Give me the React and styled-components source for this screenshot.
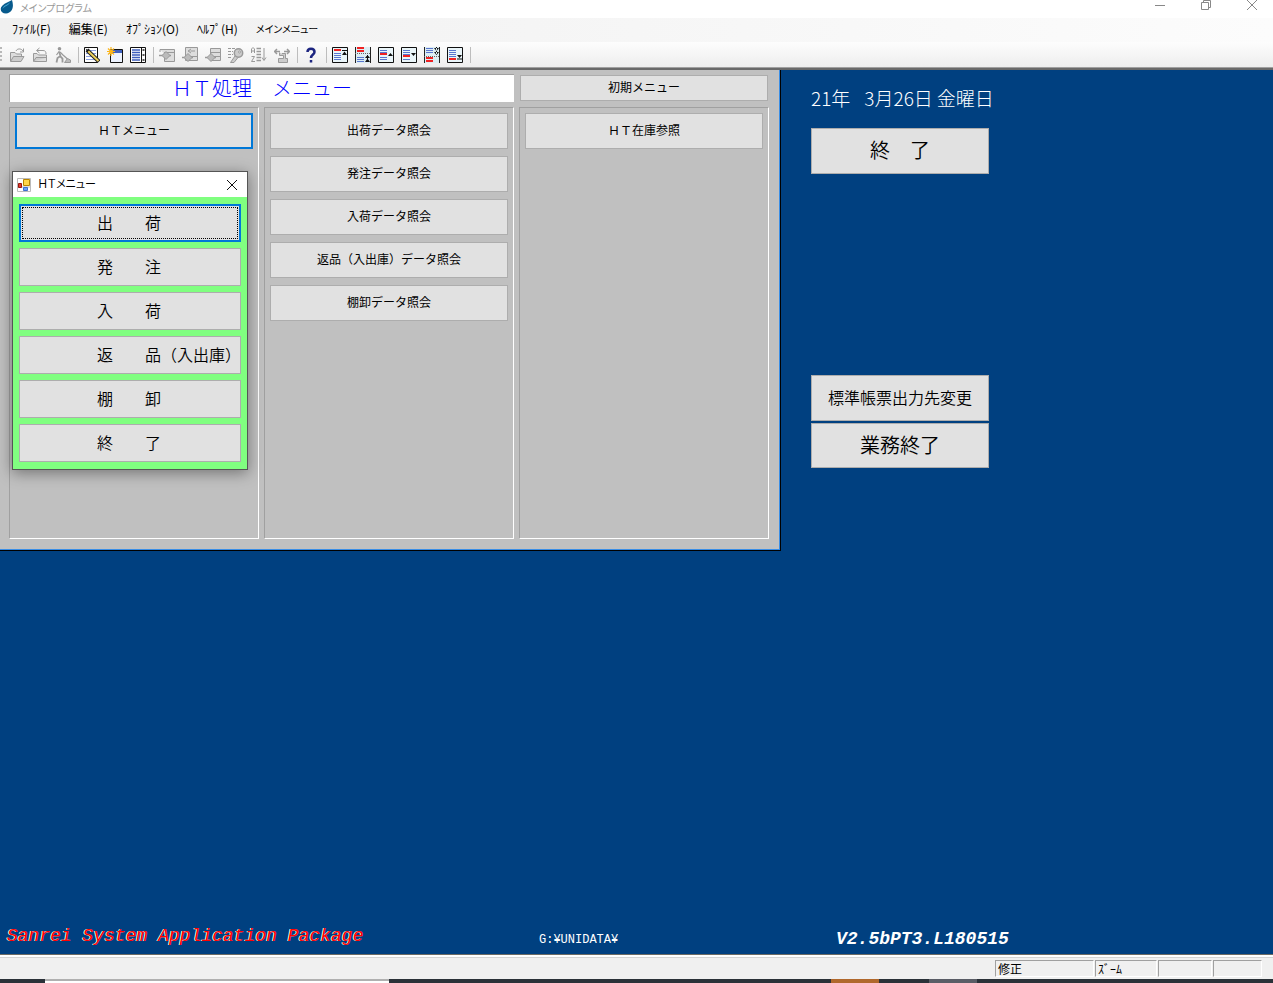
import React from "react";
import styled, { createGlobalStyle, css } from "styled-components";

const GlobalStyle = createGlobalStyle`
  *, *::before, *::after { box-sizing: border-box; }
  body {
    margin: 0;
    background: #f0f0f0;
    font-family: "Noto Sans CJK JP", "Liberation Sans", sans-serif;
    font-size: 12px;
    color: #000;
  }
  button { font-family: inherit; color: inherit; }
`;

const mono = css`font-family: "Liberation Mono", "Noto Sans CJK JP", monospace;`;

const Window = styled.div`
  display: flex;
  flex-direction: column;
  min-height: 100vh;
`;

const TitleBar = styled.header`
  display: flex;
  align-items: flex-start;
  height: 18px;
  background: #fff;
`;

const AppTitle = styled.h1`
  flex: 1;
  margin: 0 0 0 6px;
  font-size: 10px;
  font-weight: 400;
  line-height: 15px;
  color: #999;
  font-feature-settings: "palt";
`;

const CaptionButton = styled.button`
  width: 46px;
  height: 12px;
  padding: 0 0 0 4px;
  border: 0;
  background: none;
  display: flex;
  justify-content: center;
`;

const MenuBar = styled.nav`
  display: flex;
  gap: 18px;
  height: 24px;
  padding-left: 12px;
  background: linear-gradient(90deg, #f0f0f0, #fcfcfc);
`;

const MenuItem = styled.button`
  height: 22px;
  padding: 0;
  border: 0;
  background: none;
  font-size: ${(p) => (p.$tight ? 10 : 12)}px;
  line-height: 22px;
  white-space: nowrap;
  font-feature-settings: ${(p) => (p.$tight ? '"palt"' : "normal")};
`;

const ToolBar = styled.div`
  display: flex;
  align-items: center;
  height: 28px;
  padding-left: 5px;
  background: linear-gradient(#fdfdfd, #ededed);
  border-bottom: 2px solid #696969;
  box-shadow: inset 0 -1px #a0a0a0;
  position: relative;
`;

const Grip = styled.span`
  position: absolute;
  left: 0;
  top: 5px;
  width: 2px;
  height: 16px;
  background: repeating-linear-gradient(#b8b8b8 0 2px, transparent 2px 4px);
`;

const ToolButton = styled.button`
  display: grid;
  place-items: center;
  width: 23px;
  height: 22px;
  padding: 0;
  border: 0;
  background: none;
`;

const Separator = styled.span`
  width: 6px;
  height: 16px;
  background: linear-gradient(#bdbdbd, #bdbdbd) 4px 0 / 1px 100% no-repeat;
`;

const Workspace = styled.main`
  flex: 1;
  display: flex;
  flex-direction: column;
  justify-content: space-between;
  background: #004080;
  position: relative;
`;

const Upper = styled.div`
  display: flex;
  align-items: flex-start;
`;

const Panel = styled.section`
  flex: 0 1 781px;
  display: grid;
  grid-template-columns: repeat(3, 1fr);
  gap: 5px;
  padding: 4px 11px 11px 9px;
  background: #c0c0c0;
  border: solid #000;
  border-width: 0 1px 1px 0;
  box-shadow: inset -1px -1px #3a8ee6;
`;

const PanelTitle = styled.h2`
  grid-column: span 2;
  margin: 0;
  height: 28px;
  border: solid #a0a0a0;
  border-width: 1px 0 0 1px;
  background: #fff;
  color: #00f;
  font-size: 20px;
  font-weight: 300;
  line-height: 25px;
  text-align: center;
`;

const Button = styled.button`
  width: 100%;
  height: ${(p) => p.$height || 36}px;
  padding: 0 0 2px;
  border: 1px solid #adadad;
  background: #e1e1e1;
  font-size: ${(p) => p.$size || 12}px;
  font-weight: ${(p) => (p.$size ? 350 : 400)};
  line-height: 1;
  white-space: pre;
  ${(p) => p.$active && "border: 2px solid #0078d7;"}
`;

const HeadCell = styled.div`
  padding: 1px;
`;

const Column = styled.div`
  display: flex;
  flex-direction: column;
  gap: 7px;
  height: 432px;
  padding: 5px;
  border: 1px solid;
  border-color: #a0a0a0 #fff #fff #a0a0a0;
`;

const Side = styled.aside`
  width: 210px;
  padding: 16px 0 0 30px;
`;

const DateLine = styled.p`
  display: flex;
  gap: ${(p) => p.$gap}px;
  margin: 0 0 18px;
  color: #fff;
  font-size: 19px;
  font-weight: 300;
  line-height: 24px;
  white-space: nowrap;
`;

const DateYear = styled.span`
  margin-right: 10px;
`;

const SideButtons = styled.div`
  display: flex;
  flex-direction: column;
  gap: 2px;
  width: 178px;
  margin-bottom: ${(p) => p.$space || 0}px;
`;

const Credits = styled.footer`
  display: grid;
  grid-template-columns: 532px 297px 1fr;
  align-items: center;
  height: 36px;
  padding-left: 7px;
  color: #fff;
  ${mono}
`;

const Product = styled.span`
  color: #f00;
  font-size: 18px;
  font-style: italic;
  text-shadow: -1px 0 #fff;
  white-space: nowrap;
`;

const DataPath = styled.span`
  padding-top: 8px;
  font-size: 12px;
`;

const Version = styled.span`
  padding-top: 6px;
  font-size: 18px;
  font-style: italic;
  font-weight: 700;
`;

const StatusBar = styled.div`
  display: flex;
  justify-content: flex-end;
  gap: 1px;
  height: 25px;
  padding: 5px 11px 2px 0;
  border-top: 1px solid #6c6c66;
  box-shadow: inset 0 2px #fff, inset 0 3px #d4d4d4;
`;

const StatusCell = styled.span`
  width: ${(p) => p.$width}px;
  height: 17px;
  padding-left: 2px;
  border: 1px solid;
  border-color: #a0a0a0 #fff #fff #a0a0a0;
  font-size: 12px;
  line-height: 16px;
  white-space: nowrap;
`;

const TaskStrip = styled.div`
  display: grid;
  grid-template-columns: 45px 344px 442px 48px 50px 48px 1fr;
  height: 4px;
  background: #2a3138;
`;

const TaskBlock = styled.span`
  grid-column: ${(p) => p.$col};
  grid-row: 1;
  background: ${(p) => p.$color};
  ${(p) => p.$edge && "border-top: 2px solid #b0b0b0;"}
`;

const Dialog = styled.section`
  position: absolute;
  left: 12px;
  top: 101px;
  width: 236px;
  border: 1px solid #555;
  background: #80ff80;
  box-shadow: 0 3px 14px rgba(0, 0, 0, 0.4);
`;

const DialogBar = styled.div`
  display: flex;
  align-items: center;
  height: 25px;
  padding: 0 8px 0 4px;
  background: #fff;
`;

const DialogTitle = styled.h2`
  flex: 1;
  margin: 0 0 0 7px;
  font-size: 11px;
  font-weight: 400;
  line-height: 22px;
  height: 25px;
  font-feature-settings: "palt";
`;

const CloseButton = styled.button`
  display: grid;
  place-items: center;
  width: 14px;
  height: 14px;
  padding: 0;
  border: 0;
  background: none;
`;

const DialogList = styled.div`
  display: flex;
  flex-direction: column;
  gap: 6px;
  padding: 7px 6px;
`;

const DialogButton = styled(Button)`
  padding-left: ${(p) => (p.$active ? 76 : 77)}px;
  text-align: left;
  ${(p) => p.$active && "outline: 1px dotted #000; outline-offset: -4px;"}
`;

const Icon = ({ children, size = 16, ...rest }) => (
  <svg width={size} height={size} viewBox="0 0 16 16" fill="none" aria-hidden="true" {...rest}>
    {children}
  </svg>
);

const G = "#999";

const OpenIcon = () => (
  <Icon stroke={G}>
    <path d="M1.500 14V5.500H6L7.500 7H12.500V9" fill="#ddd" />
    <path d="M1.500 14.500L4.500 9.500H15L12 14.500Z" fill="#ccc" />
    <path d="M7 4C8 1.500 12 1 14 4M14.500 1.500V5H11" />
  </Icon>
);
const BackIcon = () => (
  <Icon stroke={G}>
    <path d="M1.500 14V6.500H5L6.500 8H14.500V14.500H1.500" fill="#ddd" />
    <path d="M1.500 14.500L4 10.500H14.500" fill="#ccc" />
    <path d="M5 3.500H11C13.500 3.500 14 5 14 7M7.500 1L4.500 3.500L7.500 6" />
  </Icon>
);
const WorkIcon = () => (
  <Icon stroke={G}>
    <circle cx="4.500" cy="1.800" r="1.800" fill={G} stroke="none" />
    <path d="M4 4.500L5.500 9M5.500 9L2.500 11L1.500 15.500M5 9L7.500 11.500V15.500" strokeWidth="1.800" />
    <path d="M4 4.500L1.500 8M5 5L8 8L12.500 12" strokeWidth="1.200" />
    <path d="M9.500 15.500L12.500 11.500L15.500 13V15.500Z" fill="#bbb" />
  </Icon>
);
const EditIcon = () => (
  <Icon>
    <path d="M.5 .5H13.500V15.500H.5Z" fill="#fff" stroke="#111" />
    <path d="M2 3.500H12M2 6.500H12M2 9.500H12M2 12.500H12" stroke="#8aa0e0" />
    <path d="M3 3L15 14.500" stroke="#222" strokeWidth="4" />
    <path d="M4 4L14.500 14" stroke="#ecd05c" strokeWidth="2" />
    <path d="M1.500 1.500L5 3.500L3.500 5Z" fill="#111" />
  </Icon>
);
const NewIcon = () => (
  <Icon>
    <path d="M3.500 2.500H15.500V15.500H3.500Z" fill="#edf3ff" stroke="#111" />
    <path d="M4 4.500H15" stroke="#3f62c0" strokeWidth="3" />
    <path d="M4 0V9M0 4.500H8M1 1.500L7 7.500M7 1.500L1 7.500" stroke="#fbb51c" strokeWidth="1.200" />
  </Icon>
);
const ListIcon = () => (
  <Icon>
    <path d="M.5 .5H15.500V15.500H.5Z" fill="#fff" stroke="#111" />
    <path d="M2 3H10M2 5.500H10M2 8H10M2 10.500H10M2 13H10" stroke="#3f5fbd" strokeWidth="1.500" />
    <path d="M11.500 1V15" stroke="#111" />
    <path d="M13.500 2V4M13.500 7V9M13.500 12V14" stroke="#555" strokeWidth="2" />
  </Icon>
);
const NodeIcon = ({ kind }) => (
  <Icon stroke={G}>
    {kind === 0 && <path d="M1 2.500H15.500V14.500H5.500V7M5 5.500H15M1 2.500V5" fill="#ddd" />}
    {kind === 1 && <path d="M3.500 .5H15.500V13.500H3.500ZM4 9.500H15M9 2L6 4L9 6M7 4H13" fill="#ddd" />}
    {kind === 2 && <path d="M5.500 1.500H15.500V13.500H5.500ZM6 5.500H15M6 9.500H15" fill="#ddd" />}
    <path d={kind === 0 ? "M0 8.500H12" : "M0 10.500H11"} strokeWidth="1.500" />
    <path d={kind === 0 ? "M7 4.500L11 8.500L7 12.500L3 8.500Z" : "M6 6.500L10 10.500L6 14.500L2 10.500Z"} fill="#bbb" />
  </Icon>
);
const KeyIcon = () => (
  <Icon stroke={G}>
    <path d="M0 1.500H8M0 4.500H5M0 7.500H5M0 10.500H3" strokeDasharray="3 1" />
    <path d="M7 9L2.500 15.500H6L10 10.500" fill="#ccc" />
    <circle cx="10.500" cy="6" r="4.200" fill="#ccc" strokeWidth="1.500" />
    <circle cx="11.500" cy="5" r="1" fill="#fff" />
  </Icon>
);
const SortIcon = () => (
  <Icon stroke={G}>
    <path d="M.5 6V2L2 .5L3.500 2V6M.5 4H3.500M.5 9.500H3.500L.5 14.500H4" />
    <path d="M5.500 1.500H10M5.500 4.500H10M5.500 7.500H10M5.500 10.500H10M5.500 13.500H10" strokeWidth="1.500" />
    <path d="M13 1V13M11 10.500L13 13.500L15 10.500" />
  </Icon>
);
const MoveIcon = () => (
  <Icon stroke={G}>
    <path d="M.5 4.500H6M3 2L.5 4.500L3 7M10 4.500H15.500M13 2L15.500 4.500L13 7" strokeWidth="1.500" />
    <path d="M5.500 5.500V8.500H9.500V11.500H4.500V15.500H13.500V11.500H11.500V6.500H8" fill="#ccc" />
  </Icon>
);
const HelpIcon = () => (
  <Icon stroke="#1d2580" strokeWidth="2.500">
    <path d="M4.500 5C4.500 .5 11.500 .5 11.500 5C11.500 7.500 8 7.500 8 11M8 13V15.500" />
  </Icon>
);

const scrollMarks = [
  { red: [3], lines: [6, 8, 10, 12], mark: "M10 3H15V4H10ZM12.500 4.500L15 8H10Z" },
  { red: [1, 4], lines: [10, 12, 14], mark: "M12.500 8L15 11H10ZM12.500 11.500L15 15H10ZM12 8H13V15H12Z", split: 6 },
  { red: [7], lines: [3, 5, 10, 12], mark: "M12.500 6L15 9H10Z" },
  { red: [9], lines: [3, 5, 7, 12], mark: "M12.500 9L15 6H10Z" },
  { red: [11, 14], lines: [1, 3, 5], mark: "M12.500 4L15 1H10ZM12.500 8L15 5H10ZM12 0H13V7H12Z", split: 9 },
  { red: [12], lines: [3, 5, 7, 9], mark: "M12.500 11L15 8H10ZM10 11.500H15V12.500H10Z" },
];

const ScrollIcon = ({ red, lines, mark, split }) => (
  <Icon>
    {split ? (
      <>
        <path d="M0 0H16V16H0Z" fill="#dcedf4" />
        <path d="M.5 0V16M15.500 0V16" stroke="#222" />
        <path d={`M0 ${split}.5H16`} stroke="#666" strokeDasharray="1 1" />
      </>
    ) : (
      <path d="M.5 .5H15.500V15.500H.5Z" fill="#eaf5f9" stroke="#111" />
    )}
    {lines.map((y) => <path key={y} d={`M2 ${y}.5H9`} stroke="#5a76cf" />)}
    {red.map((y) => <path key={y} d={`M2 ${y}H9`} stroke="#f02222" strokeWidth="2" />)}
    <path d={mark} fill="#111" />
  </Icon>
);

const toolGroups = [
  [["開く", <OpenIcon />], ["戻る", <BackIcon />], ["実行", <WorkIcon />]],
  [["編集", <EditIcon />], ["新規", <NewIcon />], ["一覧", <ListIcon />]],
  [
    ["挿入", <NodeIcon kind={0} />],
    ["置換", <NodeIcon kind={1} />],
    ["追加", <NodeIcon kind={2} />],
    ["キー", <KeyIcon />],
    ["並べ替え", <SortIcon />],
    ["移動", <MoveIcon />],
  ],
  [["ヘルプ", <HelpIcon />]],
  scrollMarks.map((m, i) => [`スクロール${i + 1}`, <ScrollIcon {...m} />]),
];

const menus = ["ﾌｧｲﾙ(F)", "編集(E)", "ｵﾌﾟｼｮﾝ(O)", "ﾍﾙﾌﾟ(H)"];
const inquiries = ["出荷データ照会", "発注データ照会", "入荷データ照会", "返品（入出庫）データ照会", "棚卸データ照会"];
const dialogItems = ["出　　荷", "発　　注", "入　　荷", "返　　品（入出庫）", "棚　　卸", "終　　了"];

export default function App() {
  return (
    <Window>
      <GlobalStyle />
      <TitleBar>
        <svg width="14" height="14" viewBox="0 0 14 14" aria-hidden="true">
          <path d="M12 0C14 6 13 13 6 13.500C1 13.500-1 9 2.500 5.500C5 3 9 2 12 0Z" fill="#075a8c" />
          <path d="M10 2C8 5 3 5 2.500 9C5 5.500 9 6 10 2Z" fill="#46a5cf" />
        </svg>
        <AppTitle>メインプログラム</AppTitle>
        <CaptionButton aria-label="最小化">
          <svg width="12" height="12" aria-hidden="true"><path d="M1 5.500H11" stroke="#888" /></svg>
        </CaptionButton>
        <CaptionButton aria-label="元に戻す">
          <svg width="12" height="12" fill="none" stroke="#888" aria-hidden="true">
            <path d="M1.500 2.500H8.500V9.500H1.500ZM3.500 2V.5H10.500V7.500H9" />
          </svg>
        </CaptionButton>
        <CaptionButton aria-label="閉じる">
          <svg width="12" height="12" stroke="#888" aria-hidden="true"><path d="M1 0L11 10M11 0L1 10" /></svg>
        </CaptionButton>
      </TitleBar>
      <MenuBar>
        {menus.map((m) => <MenuItem key={m}>{m}</MenuItem>)}
        <MenuItem $tight>メインメニュー</MenuItem>
      </MenuBar>
      <ToolBar>
        <Grip />
        {toolGroups.map((group, i) => (
          <React.Fragment key={i}>
            {group.map(([label, icon]) => (
              <ToolButton key={label} aria-label={label}>{icon}</ToolButton>
            ))}
            <Separator />
          </React.Fragment>
        ))}
      </ToolBar>
      <Workspace>
        <Upper>
          <Panel>
            <PanelTitle>ＨＴ処理　メニュー</PanelTitle>
            <HeadCell><Button $height={26}>初期メニュー</Button></HeadCell>
            <Column><Button $active>ＨＴメニュー</Button></Column>
            <Column>{inquiries.map((t) => <Button key={t}>{t}</Button>)}</Column>
            <Column><Button>ＨＴ在庫参照</Button></Column>
          </Panel>
          <Side>
            <DateLine $gap={4}><DateYear>21年</DateYear><span>3月26日</span><span>金曜日</span></DateLine>
            <SideButtons $space={201}><Button $height={46} $size={20}>終　了</Button></SideButtons>
            <SideButtons>
              <Button $height={46} $size={16}>標準帳票出力先変更</Button>
              <Button $height={45} $size={20}>業務終了</Button>
            </SideButtons>
          </Side>
        </Upper>
        <Credits>
          <Product>Sanrei System Application Package</Product>
          <DataPath>G:¥UNIDATA¥</DataPath>
          <Version>V2.5bPT3.L180515</Version>
        </Credits>
        <Dialog role="dialog" aria-label="ＨＴメニュー">
          <DialogBar>
            <svg width="14" height="14" viewBox="0 0 14 14" aria-hidden="true">
              <path d="M.5 .5H13.500V13.500H.5ZM.5 9H13" fill="#fff" stroke="#bbb" />
              <path d="M6.500 1.500H12.500V7.500H6.500Z" fill="#ffd64a" stroke="#b98500" />
              <path d="M1.500 5.500H4.500V9.500H1.500Z" fill="#e03c30" stroke="#98150d" />
              <path d="M6.500 9.500H10.500V12.500H6.500Z" fill="#6ea0f4" stroke="#3b6fd0" />
            </svg>
            <DialogTitle>ＨＴメニュー</DialogTitle>
            <CloseButton aria-label="閉じる">
              <svg width="12" height="12" stroke="#111" aria-hidden="true"><path d="M1 1L11 11M11 1L1 11" /></svg>
            </CloseButton>
          </DialogBar>
          <DialogList>
            {dialogItems.map((t, i) => (
              <DialogButton key={t} $height={38} $size={16} $active={i === 0}>{t}</DialogButton>
            ))}
          </DialogList>
        </Dialog>
      </Workspace>
      <StatusBar>
        <StatusCell $width={99}>修正</StatusCell>
        <StatusCell $width={62}>ｽﾞｰﾑ</StatusCell>
        <StatusCell $width={54} />
        <StatusCell $width={49} />
      </StatusBar>
      <TaskStrip>
        <TaskBlock $col={2} $color="#fff" $edge />
        <TaskBlock $col={4} $color="#b0682c" />
        <TaskBlock $col={6} $color="#5a5d66" />
      </TaskStrip>
    </Window>
  );
}
